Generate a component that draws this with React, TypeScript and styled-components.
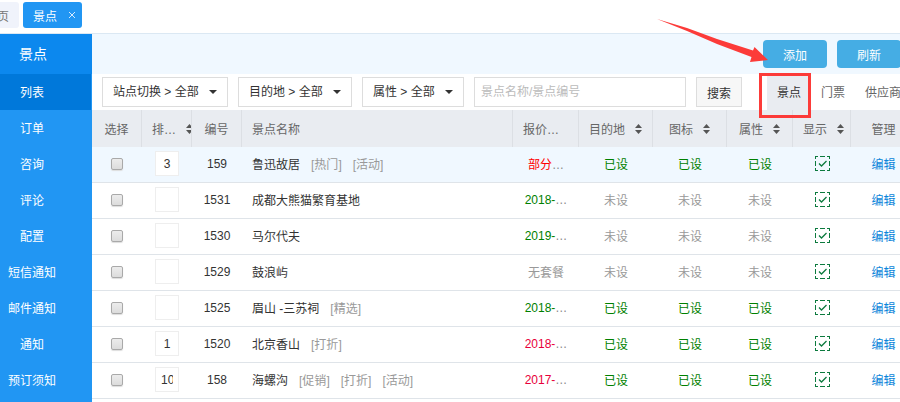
import React from "react";
import styled, { createGlobalStyle, css } from "styled-components";

const GlobalStyle = createGlobalStyle`
  *, *::before, *::after { box-sizing: border-box; }
  body {
    margin: 0;
    background: #fff;
    overflow: hidden;
  }
  body, button, input, select {
    font-family: "Liberation Sans", "Noto Sans CJK SC", sans-serif;
    font-size: 12px;
    color: #333;
  }
  a { text-decoration: none; }
`;

const Page = styled.div`
  display: flex;
  flex-direction: column;
  height: 100vh;
  overflow: hidden;
`;

const TabBar = styled.header`
  display: flex;
  gap: 4px;
  height: 34px;
  flex: none;
  padding-top: 2px;
  border-bottom: 1px solid #dbe8f3;
`;

const HomeTab = styled.a`
  display: flex;
  justify-content: flex-end;
  align-items: center;
  width: 19px;
  height: 26px;
  padding-right: 10px;
  overflow: hidden;
  border-radius: 0 3px 3px 0;
  background: #f0f3fb;
  color: #777;
`;

const PageTab = styled.div`
  display: flex;
  align-items: center;
  gap: 11px;
  height: 26px;
  padding: 0 6px 0 10px;
  border-radius: 3px;
  background: #2196f3;
  color: #fff;
`;

const CloseButton = styled.button`
  display: flex;
  padding: 0;
  border: 0;
  background: none;
  cursor: pointer;
`;

const Body = styled.div`
  display: flex;
  flex: 1;
  min-height: 0;
`;

const Sidebar = styled.nav`
  width: 92px;
  flex: none;
  background: #2196f3;
`;

const SidebarTitle = styled.h1`
  margin: 0;
  padding-right: 26px;
  background: #0c88ee;
  color: #fff;
  font-size: 14px;
  font-weight: 400;
  line-height: 40px;
  text-align: center;
`;

const SidebarLink = styled.a<{ $active?: boolean }>`
  display: block;
  height: 36px;
  margin-right: 1px;
  padding: 1px 27px 0 0;
  background: ${(p) => (p.$active ? "#0078da" : "transparent")};
  color: #fff;
  line-height: 36px;
  text-align: center;
  white-space: nowrap;
`;

const Main = styled.main`
  flex: 1;
  min-width: 0;
  overflow-x: clip;
`;

const ActionBar = styled.div`
  display: flex;
  justify-content: flex-end;
  gap: 10px;
  height: 40px;
  margin-right: -1px;
  padding-top: 6px;
  background: #f0f8ff;
`;

const ActionButton = styled.button`
  position: relative;
  width: 64px;
  height: 28px;
  padding: 0;
  border: 0;
  border-radius: 4px;
  background: #45ade4;
  color: #fff;
  cursor: pointer;
`;

const Pointer = styled.svg`
  position: absolute;
  top: -21px;
  right: 58px;
  pointer-events: none;
  z-index: 2;
`;

const FilterBar = styled.div`
  display: flex;
  align-items: center;
  gap: 10px;
  height: 36px;
  padding-left: 10px;
`;

const SelectBox = styled.label`
  display: grid;
  align-items: center;
  flex: none;
  height: 30px;
  border: 1px solid #ddd;
  > * { grid-area: 1 / 1; }
  > svg {
    justify-self: end;
    margin-right: 10px;
    pointer-events: none;
  }
`;

const Select = styled.select`
  appearance: none;
  height: 28px;
  padding: 0 28px 0 10px;
  border: 0;
  border-radius: 0;
  background: transparent;
`;

const SearchInput = styled.input`
  flex: none;
  width: 212px;
  height: 30px;
  padding: 0 6px;
  border: 1px solid #ddd;
  &::placeholder { color: #bbb; }
`;

const SearchButton = styled.button`
  flex: none;
  width: 46px;
  height: 30px;
  padding: 0;
  border: 1px solid #ddd;
  background: #f7f7f7;
`;

const ViewTabs = styled.div`
  display: flex;
  flex: none;
  align-self: stretch;
  margin-left: 15px;
  padding-top: 2px;
`;

const ViewTab = styled.a<{ $active?: boolean }>`
  position: relative;
  padding: 0 10px;
  color: #666;
  line-height: 34px;
  white-space: nowrap;
  ${(p) =>
    p.$active &&
    css`
      background: #e9ecf1;
      color: #333;
      &::after {
        content: "";
        position: absolute;
        inset: -3px 0 -8px -8px;
        border: 3px solid #fc3b39;
        z-index: 1;
      }
    `}
`;

const Table = styled.table`
  width: 100%;
  table-layout: fixed;
  border-collapse: separate;
  border-spacing: 0;
`;

const Col = styled.col<{ $w?: number }>`
  width: ${(p) => (p.$w ? `${p.$w}px` : "auto")};
`;

const HeadCell = styled.th<{ $left?: boolean }>`
  height: 37px;
  padding: 0 0 0 ${(p) => (p.$left ? "10px" : "0")};
  overflow: hidden;
  border-right: 1px solid #dcdfe4;
  background: #e9ecf1;
  color: #666;
  font-weight: 400;
  text-align: ${(p) => (p.$left ? "left" : "center")};
  white-space: nowrap;
  &:last-child {
    border-right: 0;
    padding-left: 16px;
  }
`;

const SortLabel = styled.span`
  display: inline-flex;
  align-items: center;
  gap: 10px;
  vertical-align: middle;
`;

const Row = styled.tr<{ $hover?: boolean }>`
  background: ${(p) => (p.$hover ? "#f0f8ff" : "#fff")};
`;

const Cell = styled.td<{ $left?: boolean }>`
  height: 36px;
  padding: 0 0 2px ${(p) => (p.$left ? "10px" : "0")};
  border-bottom: 1px solid #dfe4e9;
  text-align: ${(p) => (p.$left ? "left" : "center")};
  white-space: nowrap;
  &:last-child { padding-left: 16px; }
`;

const Check = styled.input`
  appearance: none;
  display: block;
  width: 12px;
  height: 12px;
  margin: 0 auto;
  border: 1px solid #a9a9a9;
  border-radius: 2px;
  background: linear-gradient(#ececec, #dcdcdc);
  box-shadow: 0 1px 1px #ddd;
`;

const OrderInput = styled.input`
  display: block;
  width: 24px;
  height: 25px;
  margin: 0 auto;
  padding: 0 5px;
  border: 1px solid #eee;
  background: #fff;
  text-align: center;
`;

const Tag = styled.span`
  margin-left: 11px;
  color: #999;
`;

const tones = { green: "green", red: "#e8003a", bright: "#ff0000", grey: "#999" };
type Tone = keyof typeof tones;

const Status = styled.span<{ $tone: Tone }>`
  color: ${(p) => tones[p.$tone]};
`;

const Dots = styled.span`
  color: #888;
`;

const EditLink = styled.a`
  color: #0a85da;
`;

const ToggleButton = styled.button`
  display: block;
  width: 15px;
  height: 15px;
  margin: 0 auto;
  padding: 0;
  border: 0;
  background: none;
  > svg { display: block; }
`;

const SortIcon = () => (
  <svg width="7" height="10" viewBox="0 0 7 10" fill="#555" aria-hidden="true">
    <path d="M0 4 3.5 0 7 4zM0 6h7L3.5 10z" />
  </svg>
);

const Caret = () => (
  <svg width="8" height="4" viewBox="0 0 8 4" fill="#333" aria-hidden="true">
    <path d="M0 0h8L4 4z" />
  </svg>
);

const VisibleIcon = () => (
  <svg width="15" height="15" viewBox="0 0 15 15" fill="none" stroke="#0c7a3e" aria-hidden="true">
    <path d="M.5 3V.5H3M5 .5h5M12 .5h2.5V3M14.5 5v5M14.5 12v2.5H12M10 14.5H5M3 14.5H.5V12M.5 10V5" shapeRendering="crispEdges" />
    <path d="m4 7.5 2.5 2.5 5-5" strokeWidth="1.3" />
  </svg>
);

const menu = ["列表", "订单", "咨询", "评论", "配置", "短信通知", "邮件通知", "通知", "预订须知"];
const filters = ["站点切换", "目的地", "属性"];

const columns: { title: string; width?: number; left?: boolean; sort?: boolean }[] = [
  { title: "选择", width: 50 },
  { title: "排…", width: 50, left: true, sort: true },
  { title: "编号", width: 50 },
  { title: "景点名称", left: true },
  { title: "报价…", width: 66, left: true },
  { title: "目的地", width: 74, sort: true },
  { title: "图标", width: 74, sort: true },
  { title: "属性", width: 66, sort: true },
  { title: "显示", width: 58, left: true, sort: true },
  { title: "管理", width: 49 },
];

interface Spot {
  id: string;
  order: string;
  name: string;
  tags: string[];
  price: string;
  tone: Tone;
  set: boolean;
}

const spots: Spot[] = [
  { id: "159", order: "3", name: "鲁迅故居", tags: ["热门", "活动"], price: "部分…", tone: "bright", set: true },
  { id: "1531", order: "", name: "成都大熊猫繁育基地", tags: [], price: "2018-…", tone: "green", set: false },
  { id: "1530", order: "", name: "马尔代夫", tags: [], price: "2019-…", tone: "green", set: false },
  { id: "1529", order: "", name: "鼓浪屿", tags: [], price: "无套餐", tone: "grey", set: false },
  { id: "1525", order: "", name: "眉山 -三苏祠", tags: ["精选"], price: "2018-…", tone: "green", set: true },
  { id: "1520", order: "1", name: "北京香山", tags: ["打折"], price: "2018-…", tone: "red", set: true },
  { id: "158", order: "10", name: "海螺沟", tags: ["促销", "打折", "活动"], price: "2017-…", tone: "red", set: true },
];

const SetCell = ({ set }: { set: boolean }) => (
  <Cell>
    <Status $tone={set ? "green" : "grey"}>{set ? "已设" : "未设"}</Status>
  </Cell>
);

const SpotRow = ({ spot, hover }: { spot: Spot; hover: boolean }) => (
  <Row $hover={hover}>
    <Cell><Check type="checkbox" aria-label={`选择 ${spot.name}`} /></Cell>
    <Cell><OrderInput defaultValue={spot.order} aria-label={`排序 ${spot.name}`} /></Cell>
    <Cell>{spot.id}</Cell>
    <Cell $left>
      {spot.name}
      {spot.tags.map((tag) => <Tag key={tag}>[{tag}]</Tag>)}
    </Cell>
    <Cell>
      <Status $tone={spot.tone}>{spot.price.replace("…", "")}</Status>
      {spot.price.endsWith("…") && <Dots>…</Dots>}
    </Cell>
    <SetCell set={spot.set} />
    <SetCell set={spot.set} />
    <SetCell set={spot.set} />
    <Cell><ToggleButton aria-label="显示"><VisibleIcon /></ToggleButton></Cell>
    <Cell><EditLink href="#edit">编辑</EditLink></Cell>
  </Row>
);

export default function App() {
  return (
    <Page>
      <GlobalStyle />
      <TabBar>
        <HomeTab href="#home">页</HomeTab>
        <PageTab>
          景点
          <CloseButton aria-label="关闭">
            <svg width="8" height="8" viewBox="0 0 8 8" stroke="#d5ebff" fill="none">
              <path d="m1 1 6 6M7 1 1 7" />
            </svg>
          </CloseButton>
        </PageTab>
      </TabBar>
      <Body>
        <Sidebar>
          <SidebarTitle>景点</SidebarTitle>
          {menu.map((item, i) => (
            <SidebarLink key={item} href="#menu" $active={i === 0}>{item}</SidebarLink>
          ))}
        </Sidebar>
        <Main>
          <ActionBar>
            <ActionButton>
              添加
              <Pointer width="112" height="44" viewBox="0 0 112 44" fill="#fc3b39" aria-hidden="true">
                <path d="M0 0 30 9 60 20 96 31.500 97.500 28 111 41 93 43 94.500 38 60 25 30 12z" />
              </Pointer>
            </ActionButton>
            <ActionButton>刷新</ActionButton>
          </ActionBar>
          <FilterBar>
            {filters.map((name) => (
              <SelectBox key={name}>
                <Select aria-label={name}>
                  <option>{`${name} > 全部`}</option>
                </Select>
                <Caret />
              </SelectBox>
            ))}
            <SearchInput placeholder="景点名称/景点编号" aria-label="景点名称/景点编号" />
            <SearchButton>搜索</SearchButton>
            <ViewTabs>
              <ViewTab href="#spots" $active>景点</ViewTab>
              <ViewTab href="#tickets">门票</ViewTab>
              <ViewTab href="#suppliers">供应商</ViewTab>
            </ViewTabs>
          </FilterBar>
          <Table>
            <colgroup>
              {columns.map((c) => <Col key={c.title} $w={c.width} />)}
            </colgroup>
            <thead>
              <tr>
                {columns.map((c) => (
                  <HeadCell key={c.title} $left={c.left}>
                    {c.sort ? <SortLabel>{c.title}<SortIcon /></SortLabel> : c.title}
                  </HeadCell>
                ))}
              </tr>
            </thead>
            <tbody>
              {spots.map((spot, i) => <SpotRow key={spot.id} spot={spot} hover={i === 0} />)}
            </tbody>
          </Table>
        </Main>
      </Body>
    </Page>
  );
}
